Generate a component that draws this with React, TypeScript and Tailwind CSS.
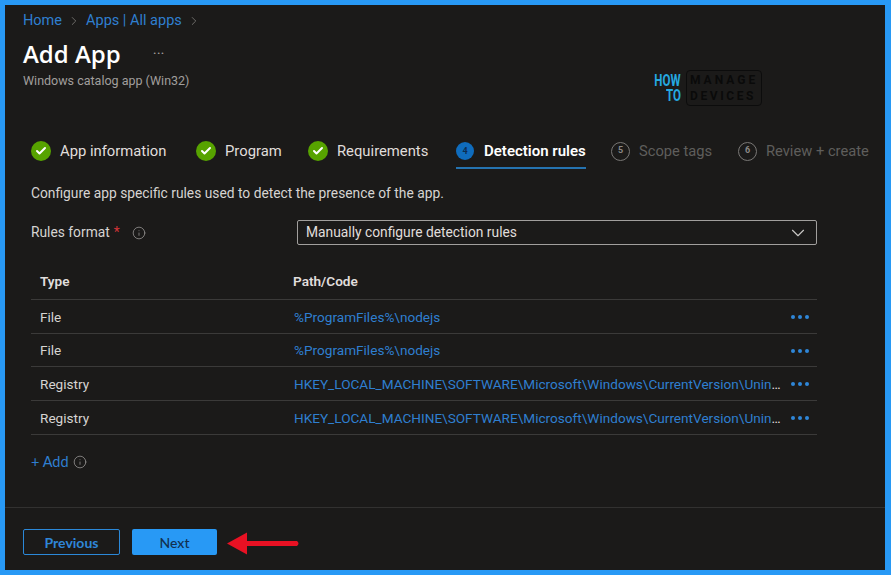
import { Check, ChevronDown, ChevronRight, Info } from "lucide-react";

const font = "font-['Roboto','Liberation_Sans',sans-serif]";

const rows = [
  { type: "File", path: "%ProgramFiles%\\nodejs", h: "h-[34px]" },
  { type: "File", path: "%ProgramFiles%\\nodejs", h: "h-[33px]" },
  { type: "Registry", path: "HKEY_LOCAL_MACHINE\\SOFTWARE\\Microsoft\\Windows\\CurrentVersion\\Uninstall\\{node}", h: "h-[34px]" },
  { type: "Registry", path: "HKEY_LOCAL_MACHINE\\SOFTWARE\\Microsoft\\Windows\\CurrentVersion\\Uninstall\\{node}", h: "h-[34px]" },
];

function DoneTab({ label, width }: { label: string; width: string }) {
  return (
    <div className={`flex shrink-0 items-center gap-[9px] ${width}`}>
      <span className="flex h-5 w-5 items-center justify-center rounded-full bg-[#57a300]">
        <Check className="h-3 w-3 text-white" strokeWidth={4} />
      </span>
      <span className="text-[14.8px] whitespace-nowrap text-[#e0dedc]">{label}</span>
    </div>
  );
}

function TodoTab({ n, label, width }: { n: number; label: string; width: string }) {
  return (
    <div className={`flex shrink-0 items-center gap-[9px] ${width}`}>
      <span className="flex h-[19px] w-[19px] items-center justify-center rounded-full border border-[#797775] text-[9px] font-bold text-[#8a8886]">
        {n}
      </span>
      <span className="text-[14.7px] whitespace-nowrap text-[#5f5e5c]">{label}</span>
    </div>
  );
}

function Logo() {
  return (
    <div className="mt-[39px] ml-[632px] flex h-[36px] items-center gap-[5px]">
      <div className="flex w-[26px] flex-col items-end text-[17px] leading-[15px] font-bold text-[#25a9e0]">
        <span className="inline-block origin-right scale-x-[0.68]">HOW</span>
        <span className="inline-block origin-right scale-x-[0.68]">TO</span>
      </div>
      <div className="flex h-[36px] w-[76px] flex-col justify-center rounded-[4px] border border-[#0c0c0c] pl-[3px] text-[12px] leading-[16px] font-bold whitespace-nowrap text-[#0a0a0a]">
        <span className="tracking-[3px]">MANAGE</span>
        <span className="tracking-[2.6px]">DEVICES</span>
      </div>
    </div>
  );
}

export default function App() {
  return (
    <div className={`h-[575px] w-[891px] overflow-hidden border-t-[5px] border-r-[6px] border-b-[5px] border-l-[5px] border-[#2899f5] bg-[#1b1a19] ${font}`}>
      <div className="flex h-full flex-col">
        <div className="h-[117px] px-[18px] pt-[6px]">
          <div className="flex h-[20px] items-center text-[14.5px] text-[#2f7fd0]">
            <span>Home</span>
            <ChevronRight className="mx-[5px] h-[14px] w-[14px] text-[#8a8886]" strokeWidth={1.25} />
            <span>Apps | All apps</span>
            <ChevronRight className="mx-[5px] h-[14px] w-[14px] text-[#8a8886]" strokeWidth={1.25} />
          </div>
          <div className="flex">
            <div className="w-[168px] shrink-0">
              <div className="mt-[5px] flex h-[36px] items-center">
                <h1 className="font-['Open_Sans',sans-serif] text-[24px] font-semibold text-white">Add App</h1>
                <span className="ml-[32px] text-[15px] text-[#a19f9d]">···</span>
              </div>
              <p className="text-[12.5px] whitespace-nowrap text-[#a19f9d]">Windows catalog app (Win32)</p>
            </div>
            <div className="-ml-[168px]">
              <Logo />
            </div>
          </div>
        </div>

        {/* wizard steps */}
        <div className="flex h-[46px] items-start px-[26px] pt-[18px]">
          <DoneTab label="App information" width="w-[165px]" />
          <DoneTab label="Program" width="w-[112px]" />
          <DoneTab label="Requirements" width="w-[148px]" />
          <div className="w-[155px] shrink-0">
            <div className="flex w-[130px] flex-col">
              <div className="flex items-center gap-[10px]">
                <span className="flex h-[18px] w-[18px] items-center justify-center rounded-full bg-[#0f6cbd] text-[9px] font-bold text-[#0c2d52]">
                  4
                </span>
                <span className="text-[15px] font-semibold whitespace-nowrap text-white">Detection rules</span>
              </div>
              <div className="mt-[4px] h-[2px] bg-[#2573b0]" />
            </div>
          </div>
          <TodoTab n={5} label="Scope tags" width="w-[127px]" />
          <TodoTab n={6} label="Review + create" width="w-[134px]" />
        </div>

        <div className="flex-1 px-[26px]">
          <p className="mt-[14px] text-[13.8px] leading-[22px] text-[#d6d4d2]">Configure app specific rules used to detect the presence of the app.</p>

          <div className="mt-[16px] flex h-[25px] items-center">
            <div className="flex w-[266px] items-center text-[13.8px] text-[#d6d4d2]">
              <span>Rules format</span>
              <span className="ml-[4px] text-[#d13438]">*</span>
              <Info className="ml-[12px] h-[14px] w-[14px] text-[#a19f9d]" strokeWidth={1.25} />
            </div>
            <div className="flex h-[25px] w-[520px] items-center justify-between rounded-[2px] border border-[#a19f9d] pr-[7px] pl-[8px] text-[13.8px] text-[#e0dedc]">
              <span>Manually configure detection rules</span>
              <ChevronDown className="h-[22px] w-[22px] text-[#c8c6c4]" strokeWidth={1.25} />
            </div>
          </div>

          <div className="mt-[18px] w-[786px]">
            <div className="flex h-[37px] items-center border-b border-[#3b3a39] text-[13.6px] font-semibold text-[#e0dedc]">
              <span className="w-[253px] pl-[9px]">Type</span>
              <span className="pl-[9px]">Path/Code</span>
            </div>
            {rows.map((r, i) => (
              <div key={i} className={`flex items-center border-b border-[#3b3a39] pt-[1px] text-[13.6px] ${r.h}`}>
                <span className="w-[253px] shrink-0 pl-[9px] text-[#d6d4d2]">{r.type}</span>
                <span className="w-[498px] truncate pl-[10px] text-[#e0dedc]">
                  <span className="text-[#2f7fd0]">{r.path}</span>
                </span>
                <span className="ml-auto flex gap-[3px] pr-[8px]">
                  <span className="h-[4px] w-[4px] rounded-full bg-[#2f86d8]" />
                  <span className="h-[4px] w-[4px] rounded-full bg-[#2f86d8]" />
                  <span className="h-[4px] w-[4px] rounded-full bg-[#2f86d8]" />
                </span>
              </div>
            ))}
          </div>

          <div className="mt-[16px] flex items-center font-['Lato',sans-serif] text-[14.5px] text-[#2f7fd0]">
            <span>+ Add</span>
            <Info className="ml-[4px] h-[14px] w-[14px] text-[#a19f9d]" strokeWidth={1.25} />
          </div>
        </div>

        {/* footer */}
        <div className="flex h-[63px] items-start gap-[12px] border-t border-[#323130] px-[18px] pt-[21px] font-['Lato',sans-serif]">
          <button className="h-[26px] w-[97px] rounded-[2px] border border-[#2b88d8] text-[14px] font-bold text-[#2f86d8]">Previous</button>
          <button className="h-[26px] w-[85px] rounded-[2px] bg-[#2899f5] text-[14px] font-medium text-[#12304f]">Next</button>
          <svg className="mt-[3px] -ml-[2px]" width="74" height="24" viewBox="0 0 74 24">
            <path d="M0 11.5 L20 0.5 L20 9 L70 9 Q73 11.5 70 14 L20 14 L20 22.5 Z" fill="#e81123" />
          </svg>
        </div>
      </div>
    </div>
  );
}
